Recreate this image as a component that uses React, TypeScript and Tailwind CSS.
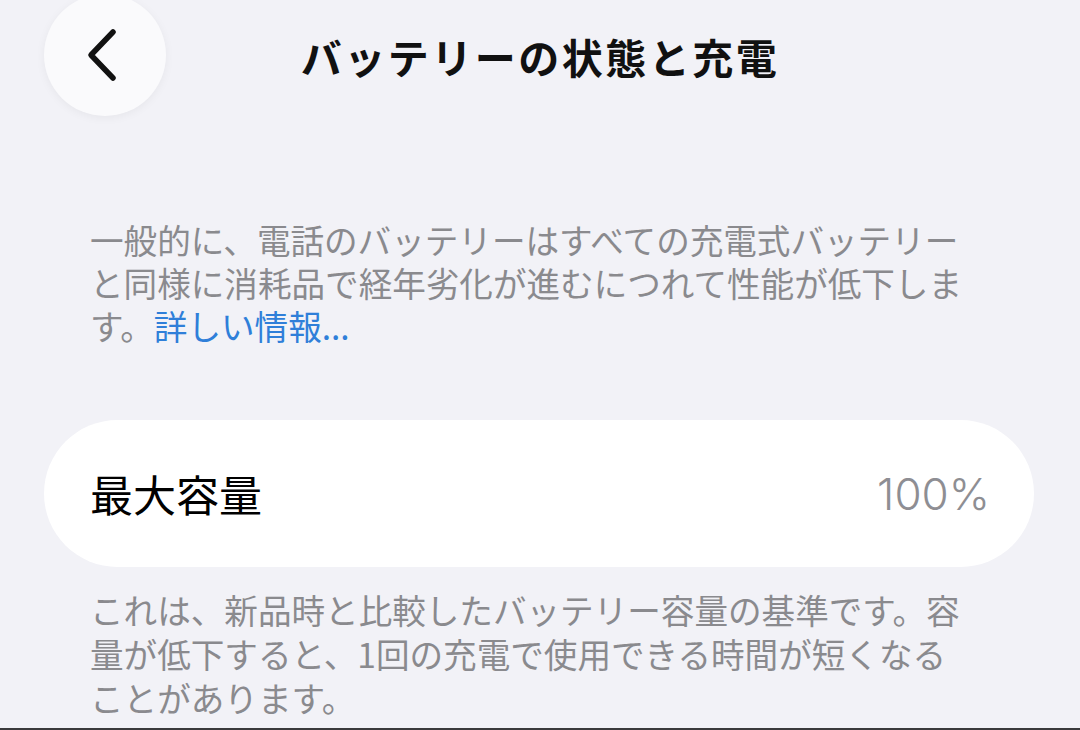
const jp = { fontFamily: '"Noto Sans CJK JP", "Noto Sans", sans-serif' };

function BackButton() {
  return (
    <button className="flex h-[122px] w-[122px] items-center justify-center rounded-full bg-[#fafafc] shadow-[0_2px_10px_rgba(0,0,0,0.05)]">
      <svg width="40" height="56" viewBox="0 0 40 56" fill="none">
        <path
          d="M28 5 L6 28 L28 51"
          stroke="#111"
          strokeWidth="5.5"
          strokeLinecap="round"
          strokeLinejoin="round"
        />
      </svg>
    </button>
  );
}

export default function App() {
  return (
    <div className="h-[730px] w-[1080px] overflow-hidden bg-[#f2f2f7] border-b-2 border-[#3a3a3c]" style={jp}>
      <header className="relative flex h-[114px] items-center justify-center">
        <div className="absolute left-[44px] top-[-6px]">
          <BackButton />
        </div>
        <h1 className="text-[41px] font-bold tracking-[2.5px] text-[#111]">バッテリーの状態と充電</h1>
      </header>

      <p className="mt-[104px] w-[975px] pl-[90px] text-[33.6px] leading-[43px] text-[#8a8a8e]">
        一般的に、電話のバッテリーはすべての充電式バッテリーと同様に消耗品で経年劣化が進むにつれて性能が低下します。
        <span className="text-[#2f7fd9]">詳しい情報...</span>
      </p>

      <div className="mx-[44px] mt-[73px] flex h-[147px] w-[990px] items-center justify-between rounded-full bg-white pl-[46px] pr-[44px]">
        <span className="text-[43px] text-black">最大容量</span>
        <span className="text-[44px] font-light text-[#8e8e93]" style={{ fontFamily: 'Inter, "Liberation Sans", sans-serif' }}>
          100%
        </span>
      </div>

      <p className="mt-[21px] w-[975px] pl-[90px] text-[33.6px] leading-[44px] text-[#8a8a8e]">
        これは、新品時と比較したバッテリー容量の基準です。容量が低下すると、1回の充電で使用できる時間が短くなることがあります。
      </p>
    </div>
  );
}
